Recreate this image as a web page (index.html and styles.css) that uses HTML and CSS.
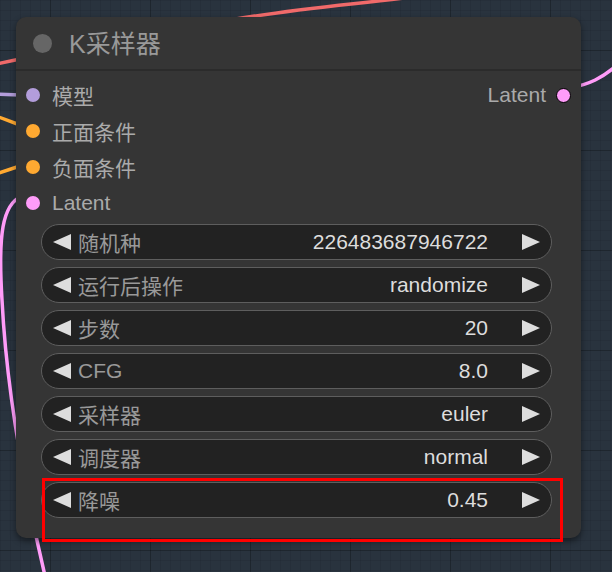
FILE: index.html
```html
<!DOCTYPE html>
<html lang="zh">
  <head>
    <meta charset="utf-8">
    <title>K采样器</title>
    <link rel="stylesheet" href="styles.css">
  </head>
  <body>

  <div class="canvas">

    <svg class="wires" width="612" height="572" viewBox="0 0 612 572">
      <path d="M230 20 C300 8, 360 4, 420 -4" stroke="#f06a6a" />
      <path d="M-4 64 L20 59" stroke="#f06a6a" />
      <path d="M-4 94 L20 95" stroke="#b39ddb" />
      <path d="M-4 116 L20 125" stroke="#ffa931" />
      <path d="M-4 174 L20 166" stroke="#ffa931" />
      <path d="M22 196 C2 204, -2 236, 2 300 C6 380, 20 470, 46 580" stroke="#ff9cf9" />
      <path d="M570 88 C590 84, 602 78, 616 66" stroke="#ff9cf9" />
    </svg>

    <div class="node">
      <div class="node-title">
        <span class="title-dot"></span>
        <span class="title-text">K采样器</span>
      </div>

      <div class="slots">
        <div class="slot-col">
          <div class="slot"><span class="dot model"></span>模型</div>
          <div class="slot"><span class="dot cond"></span>正面条件</div>
          <div class="slot"><span class="dot cond"></span>负面条件</div>
          <div class="slot"><span class="dot latent"></span>Latent</div>
        </div>
        <div class="slot-col out">
          <div class="slot">Latent<span class="dot latent outdot"></span></div>
        </div>
      </div>

      <div class="widgets">
        <div class="widget">
          <svg class="arrow" viewBox="0 0 18 18"><polygon points="18,1 18,17 0,9" /></svg>
          <span class="w-label">随机种</span>
          <span class="w-value">226483687946722</span>
          <svg class="arrow" viewBox="0 0 18 18"><polygon points="0,1 0,17 18,9" /></svg>
        </div>
        <div class="widget">
          <svg class="arrow" viewBox="0 0 18 18"><polygon points="18,1 18,17 0,9" /></svg>
          <span class="w-label">运行后操作</span>
          <span class="w-value">randomize</span>
          <svg class="arrow" viewBox="0 0 18 18"><polygon points="0,1 0,17 18,9" /></svg>
        </div>
        <div class="widget">
          <svg class="arrow" viewBox="0 0 18 18"><polygon points="18,1 18,17 0,9" /></svg>
          <span class="w-label">步数</span>
          <span class="w-value">20</span>
          <svg class="arrow" viewBox="0 0 18 18"><polygon points="0,1 0,17 18,9" /></svg>
        </div>
        <div class="widget">
          <svg class="arrow" viewBox="0 0 18 18"><polygon points="18,1 18,17 0,9" /></svg>
          <span class="w-label">CFG</span>
          <span class="w-value">8.0</span>
          <svg class="arrow" viewBox="0 0 18 18"><polygon points="0,1 0,17 18,9" /></svg>
        </div>
        <div class="widget">
          <svg class="arrow" viewBox="0 0 18 18"><polygon points="18,1 18,17 0,9" /></svg>
          <span class="w-label">采样器</span>
          <span class="w-value">euler</span>
          <svg class="arrow" viewBox="0 0 18 18"><polygon points="0,1 0,17 18,9" /></svg>
        </div>
        <div class="widget">
          <svg class="arrow" viewBox="0 0 18 18"><polygon points="18,1 18,17 0,9" /></svg>
          <span class="w-label">调度器</span>
          <span class="w-value">normal</span>
          <svg class="arrow" viewBox="0 0 18 18"><polygon points="0,1 0,17 18,9" /></svg>
        </div>
        <div class="widget">
          <svg class="arrow" viewBox="0 0 18 18"><polygon points="18,1 18,17 0,9" /></svg>
          <span class="w-label">降噪</span>
          <span class="w-value">0.45</span>
          <svg class="arrow" viewBox="0 0 18 18"><polygon points="0,1 0,17 18,9" /></svg>
        </div>
      </div>
    </div>

    <div class="highlight"></div>

  </div>

  </body>
</html>
```

FILE: styles.css
```css
html {
  height: 100%;
}
body {
  margin: 0;
  padding: 0;
  background-color: #29333e;
  font-family: "Liberation Sans", Arial, "Noto Sans CJK SC", sans-serif;
  overflow: hidden;
}

.canvas {
  position: relative;
  width: 612px;
  height: 572px;
  background-color: #29333e;
  background-image:
    linear-gradient(to right, rgba(0,0,0,0.2) 1px, transparent 1px),
    linear-gradient(to bottom, rgba(0,0,0,0.2) 1px, transparent 1px),
    linear-gradient(to right, rgba(0,0,0,0.07) 1px, transparent 1px),
    linear-gradient(to bottom, rgba(0,0,0,0.07) 1px, transparent 1px);
  background-size: 100px 100px, 100px 100px, 10px 10px, 10px 10px;
  background-position: 50px 50px, 50px 50px, 0 0, 0 0;
}

.wires {
  position: absolute;
  left: 0;
  top: 0;
}
.wires path {
  fill: none;
  stroke-width: 3.5;
  stroke-linecap: round;
}

.node {
  position: absolute;
  left: 16px;
  top: 17px;
  width: 565px;
  height: 521px;
  background: #353535;
  border-radius: 10px;
  box-shadow: 0 3px 6px rgba(0,0,0,0.45);
}

.node-title {
  height: 52px;
  display: flex;
  align-items: center;
  padding-left: 17px;
  border-bottom: 2px solid #2b2b2b;
}
.title-dot {
  width: 19px;
  height: 19px;
  border-radius: 50%;
  background: #666;
  margin-right: 17px;
}
.title-text {
  font-size: 25px;
  color: #999;
  margin-top: -2px;
}

.slots {
  display: flex;
  justify-content: space-between;
  padding: 6px 10px 0 10px;
}
.slot {
  height: 36px;
  display: flex;
  align-items: center;
  gap: 12px;
  font-size: 21px;
  color: #aaa;
}
.out .slot {
  gap: 10px;
}

.dot {
  width: 14px;
  height: 14px;
  border-radius: 50%;
}
.dot.model { background: #b39ddb; }
.dot.cond { background: #ffa931; }
.dot.latent { background: #ff9cf9; }
.dot.outdot {
  width: 13px;
  height: 13px;
  border: 1.5px solid #000;
}

.widgets {
  display: flex;
  flex-direction: column;
  gap: 7px;
  margin: 3px 29px 0 25px;
}
.widget {
  height: 36px;
  box-sizing: border-box;
  display: flex;
  align-items: center;
  gap: 7px;
  padding: 0 11px 0 11px;
  background: #222;
  border: 1.5px solid #5e5e5e;
  border-radius: 18px;
  font-size: 21px;
}
.arrow {
  width: 18px;
  height: 18px;
  flex: none;
}
.arrow polygon {
  fill: #ddd;
}
.w-label {
  color: #999;
}
.w-value {
  margin-left: auto;
  margin-right: 27px;
  color: #ddd;
}

.highlight {
  position: absolute;
  left: 42px;
  top: 478px;
  width: 521px;
  height: 64px;
  box-sizing: border-box;
  border: 3.5px solid #ff0000;
}
```
